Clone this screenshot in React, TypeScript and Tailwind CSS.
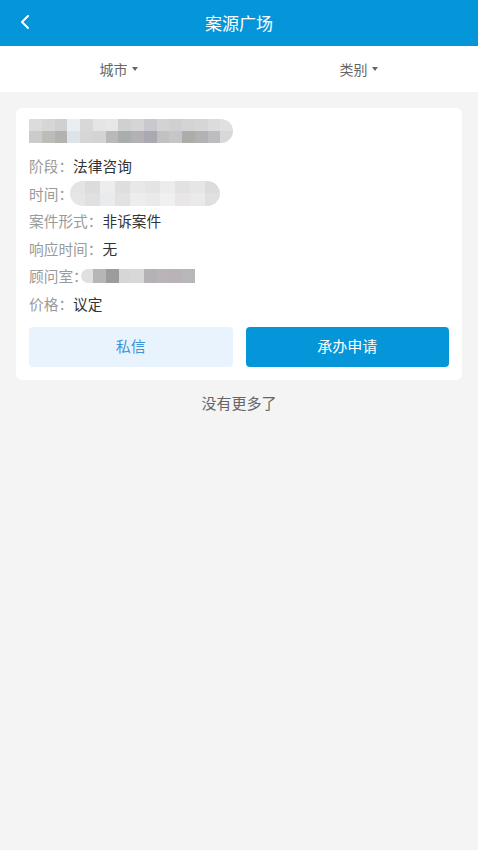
import { ChevronLeft } from "lucide-react";

const titleBlur = [
  ["#dcdcdc", "#d6d6d6", "#d0d0d0", "#e9eef2", "#d8d8d8", "#e6e4e4", "#e8e6e6", "#cfd0d0", "#d6d4d6", "#c9c8cc", "#d3d3d5", "#cfd0d2", "#d4d3d5", "#d6d6d6", "#dcdcdc", "#e0e0e0"],
  ["#cbcbcb", "#bcbcb8", "#b4b2ae", "#dde3e6", "#d6d6d6", "#d4d4d2", "#b9b9b9", "#a9adab", "#b2b2b4", "#aaa8b0", "#c1c1c1", "#c6c5c7", "#aeaca9", "#b2b1b3", "#bdbcbe", "#d8d8d8"],
];

const timeBlur = [
  ["#e4e4e4", "#dcdcdc", "#ebedee", "#dedede", "#e8e8e8", "#e4e4e4", "#ececec", "#e2e2e2", "#e6e6e6", "#dcdcdc"],
  ["#e6e6e6", "#e0e0e0", "#e9ebec", "#e2e2e2", "#ededed", "#eaeaea", "#f0f0f0", "#e8e6e6", "#eaeaea", "#e0e0e0"],
];

const roomBlur = ["#e0e0de", "#b6b6b6", "#9c9c9e", "#d6d6d6", "#d8d8d8", "#b4b2b4", "#bab4b9", "#b8b3b6", "#b8b8ba"];

const labelCls = "text-[#9a9a9a]";
const valueCls = "text-[#333333]";

const App = () => {
  return (
    <div
      className="min-h-[850px] bg-[#f4f4f4] text-[14.7px]"
      style={{ fontFamily: '"Noto Sans CJK SC", "Noto Sans", sans-serif' }}
    >
      <header className="h-[46px] bg-[#0596d9] flex items-center justify-center relative">
        <button className="absolute left-[13px] top-[10px] text-white">
          <ChevronLeft size={24} strokeWidth={2} />
        </button>
        <h1 className="text-white text-[17px]">案源广场</h1>
      </header>

      <div className="h-[46px] bg-white grid grid-cols-2 items-center text-[#666666] text-[14px]">
        <div className="flex items-center justify-center gap-[4px] pr-[2px]">
          城市
          <span className="border-x-[3px] border-t-[4px] border-x-transparent border-t-[#666666]" />
        </div>
        <div className="flex items-center justify-center gap-[4px]">
          类别
          <span className="border-x-[3px] border-t-[4px] border-x-transparent border-t-[#666666]" />
        </div>
      </div>

      <div className="px-[16px] pt-[16px]">
        <div className="bg-white rounded-[6px] px-[13px] pt-[11px] pb-[13px]">
          <div className="flex flex-col w-[204px] h-[24px] rounded-r-full overflow-hidden">
            {titleBlur.map((row, i) => (
              <div key={i} className="flex flex-1">
                {row.map((c, j) => (
                  <div key={j} className="flex-1" style={{ backgroundColor: c }} />
                ))}
              </div>
            ))}
          </div>

          <div className="mt-[12px] flex flex-col gap-[6px] leading-[21.6px]">
            <div>
              <span className={labelCls}>阶段：</span>
              <span className={valueCls}>法律咨询</span>
            </div>
            <div className="flex items-center">
              <span className={labelCls}>时间：</span>
              <div className="flex flex-col w-[150px] h-[25px] -my-[2px] rounded-full overflow-hidden -ml-[3px]">
                {timeBlur.map((row, i) => (
                  <div key={i} className="flex flex-1">
                    {row.map((c, j) => (
                      <div key={j} className="flex-1" style={{ backgroundColor: c }} />
                    ))}
                  </div>
                ))}
              </div>
            </div>
            <div>
              <span className={labelCls}>案件形式：</span>
              <span className={valueCls}>非诉案件</span>
            </div>
            <div>
              <span className={labelCls}>响应时间：</span>
              <span className={valueCls}>无</span>
            </div>
            <div className="flex items-center">
              <span className={labelCls}>顾问室：</span>
              <div className="flex w-[114px] h-[14px] -ml-[7px] rounded-l-full overflow-hidden">
                {roomBlur.map((c, j) => (
                  <div key={j} className="flex-1" style={{ backgroundColor: c }} />
                ))}
              </div>
            </div>
            <div>
              <span className={labelCls}>价格：</span>
              <span className={valueCls}>议定</span>
            </div>
          </div>

          <div className="mt-[12px] grid grid-cols-2 gap-[13px]">
            <button className="h-[40px] rounded-[4px] bg-[#e8f3fe] text-[#3b94db] text-[15px]">
              私信
            </button>
            <button className="h-[40px] rounded-[4px] bg-[#0596d9] text-white text-[15px]">
              承办申请
            </button>
          </div>
        </div>

        <p className="mt-[12px] text-center text-[#666666] text-[15px]">没有更多了</p>
      </div>
    </div>
  );
};

export default App;
